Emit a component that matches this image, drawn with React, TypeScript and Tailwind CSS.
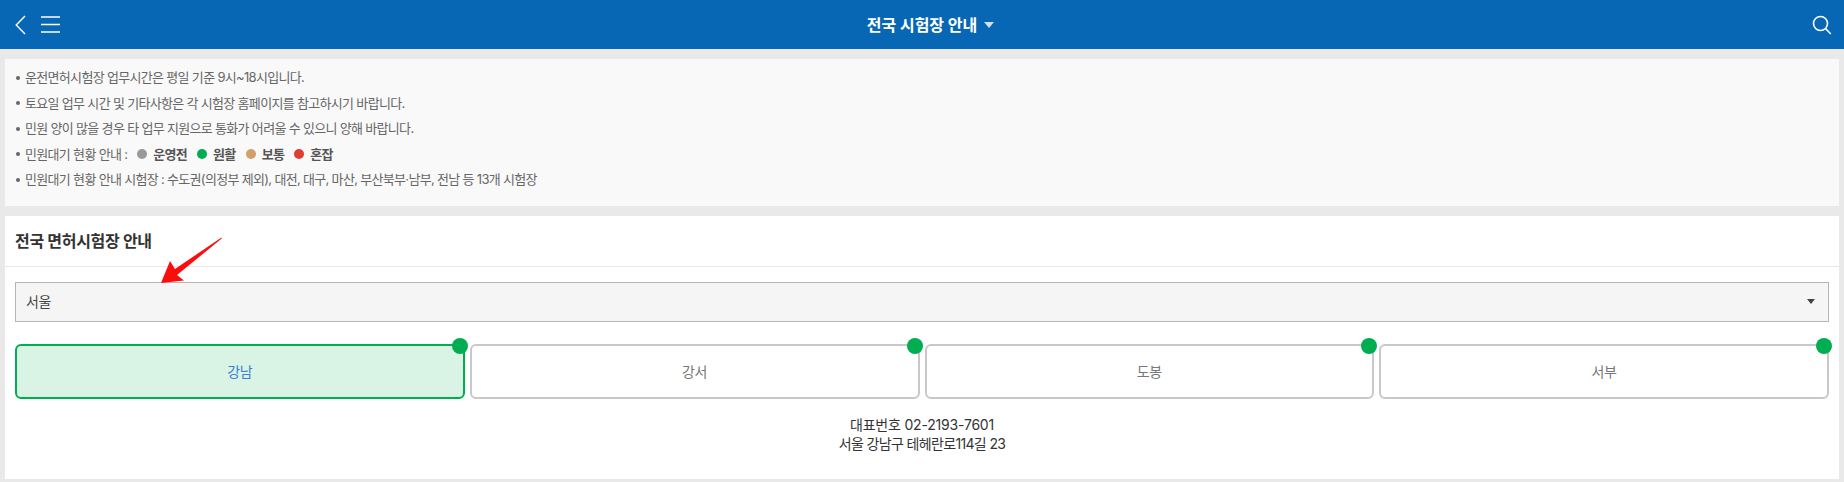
const font = { fontFamily: '"Inter", "Noto Sans CJK KR", sans-serif' };

const notices = [
  '운전면허시험장 업무시간은 평일 기준 9시~18시입니다.',
  '토요일 업무 시간 및 기타사항은 각 시험장 홈페이지를 참고하시기 바랍니다.',
  '민원 양이 많을 경우 타 업무 지원으로 통화가 어려울 수 있으니 양해 바랍니다.',
];

function Li({ children }: { children: React.ReactNode }) {
  return (
    <li className="flex h-[25.5px] items-center text-[13px] tracking-[-0.68px] text-[#666]">
      <span className="mr-[5px] h-[4px] w-[4px] shrink-0 rounded-full bg-[#666]" />
      {children}
    </li>
  );
}

function Legend({ color, label }: { color: string; label: string }) {
  return (
    <span className="mr-[10px] flex items-center">
      <span className={`mr-[6px] h-[10px] w-[10px] rounded-full ${color}`} />
      <b className="text-[13px] font-bold text-[#555]">{label}</b>
    </span>
  );
}

function Tab({ label, active }: { label: string; active?: boolean }) {
  return (
    <div
      className={`relative flex h-[55px] flex-1 items-center justify-center rounded-[6px] border-2 text-[14px] tracking-[-0.3px] ${
        active ? 'border-[#00ad50] bg-[#d9f3e5] text-[#3b7fd0]' : 'border-[#c8c8c8] bg-white text-[#777]'
      }`}
    >
      {label}
      <span className="absolute right-[-5px] top-[-8px] h-[16px] w-[16px] rounded-full bg-[#00ad50]" />
    </div>
  );
}

export default function App() {
  return (
    <div style={font} className="flex h-[482px] w-[1844px] flex-col overflow-hidden bg-[#e9e9e9]">
      <header className="flex h-[49px] shrink-0 items-center justify-between bg-[#0767b4] pl-[15px] pr-[12px] text-white">
        <div className="flex items-center gap-[15px]">
          <svg width="11" height="20" viewBox="0 0 11 20" fill="none" stroke="white" strokeWidth="1.4">
            <path d="M10 1 1.2 10 10 19" />
          </svg>
          <svg width="19" height="17" viewBox="0 0 19 17" stroke="white" strokeWidth="1.4">
            <path d="M0 1h19M0 8.5h19M0 16h19" />
          </svg>
        </div>
        <div className="-ml-[11px] flex items-center text-[16px] font-bold">
          전국 시험장 안내
          <span className="ml-[7px] h-0 w-0 border-x-[5px] border-t-[6px] border-x-transparent border-t-[#d5dfeb]" />
        </div>
        <svg width="20" height="20" viewBox="0 0 20 20" fill="none" stroke="white" strokeWidth="1.6">
          <circle cx="8.5" cy="8.5" r="7" />
          <path d="m13.6 13.6 5.2 5.4" />
        </svg>
      </header>

      <section className="mx-[5px] mt-[10px] h-[147px] shrink-0 bg-[#f9f9f9] px-[11px] pt-[6px]">
        <ul>
          {notices.map((n) => (
            <Li key={n}>{n}</Li>
          ))}
          <Li>
            민원대기 현황 안내 :
            <span className="ml-[10px] flex items-center">
              <Legend color="bg-[#999999]" label="운영전" />
              <Legend color="bg-[#00ad50]" label="원활" />
              <Legend color="bg-[#d2a06a]" label="보통" />
              <Legend color="bg-[#e03c31]" label="혼잡" />
            </span>
          </Li>
          <Li>민원대기 현황 안내 시험장 : 수도권(의정부 제외), 대전, 대구, 마산, 부산북부·남부, 전남 등 13개 시험장</Li>
        </ul>
      </section>

      <section className="relative mx-[5px] mt-[10px] h-[263px] shrink-0 bg-white">
        <h2 className="flex h-[51px] items-center border-b border-[#e8e8e8] px-[10px] pb-[1px] text-[16px] font-bold tracking-[-0.3px] text-[#333]">
          전국 면허시험장 안내
        </h2>
        <div className="mx-[10px] mt-[15px] flex h-[40px] items-center justify-between border border-[#b5b5b5] bg-[#f5f5f5] pb-[1px] pl-[10px] pr-[13px] text-[14px] tracking-[-0.3px] text-[#444]">
          서울
          <span className="h-0 w-0 border-x-[4px] border-t-[5px] border-x-transparent border-t-[#444]" />
        </div>
        <div className="mx-[10px] mt-[22px] flex gap-[5px]">
          <Tab label="강남" active />
          <Tab label="강서" />
          <Tab label="도봉" />
          <Tab label="서부" />
        </div>
        <div className="mt-[16px] text-center text-[14px] leading-[19px] text-[#333]">
          <p className="tracking-[-0.2px]">대표번호 02-2193-7601</p>
          <p className="tracking-[-0.65px]">서울 강남구 테헤란로114길 23</p>
        </div>
        <svg className="absolute left-[150px] top-[18px]" width="76" height="54" viewBox="0 0 76 54">
          <path d="M67 4.3 22 41l7 5.5L6 49l9-22 5 8L66.5 3.5z" fill="#fb0d0d" />
        </svg>
      </section>
    </div>
  );
}
